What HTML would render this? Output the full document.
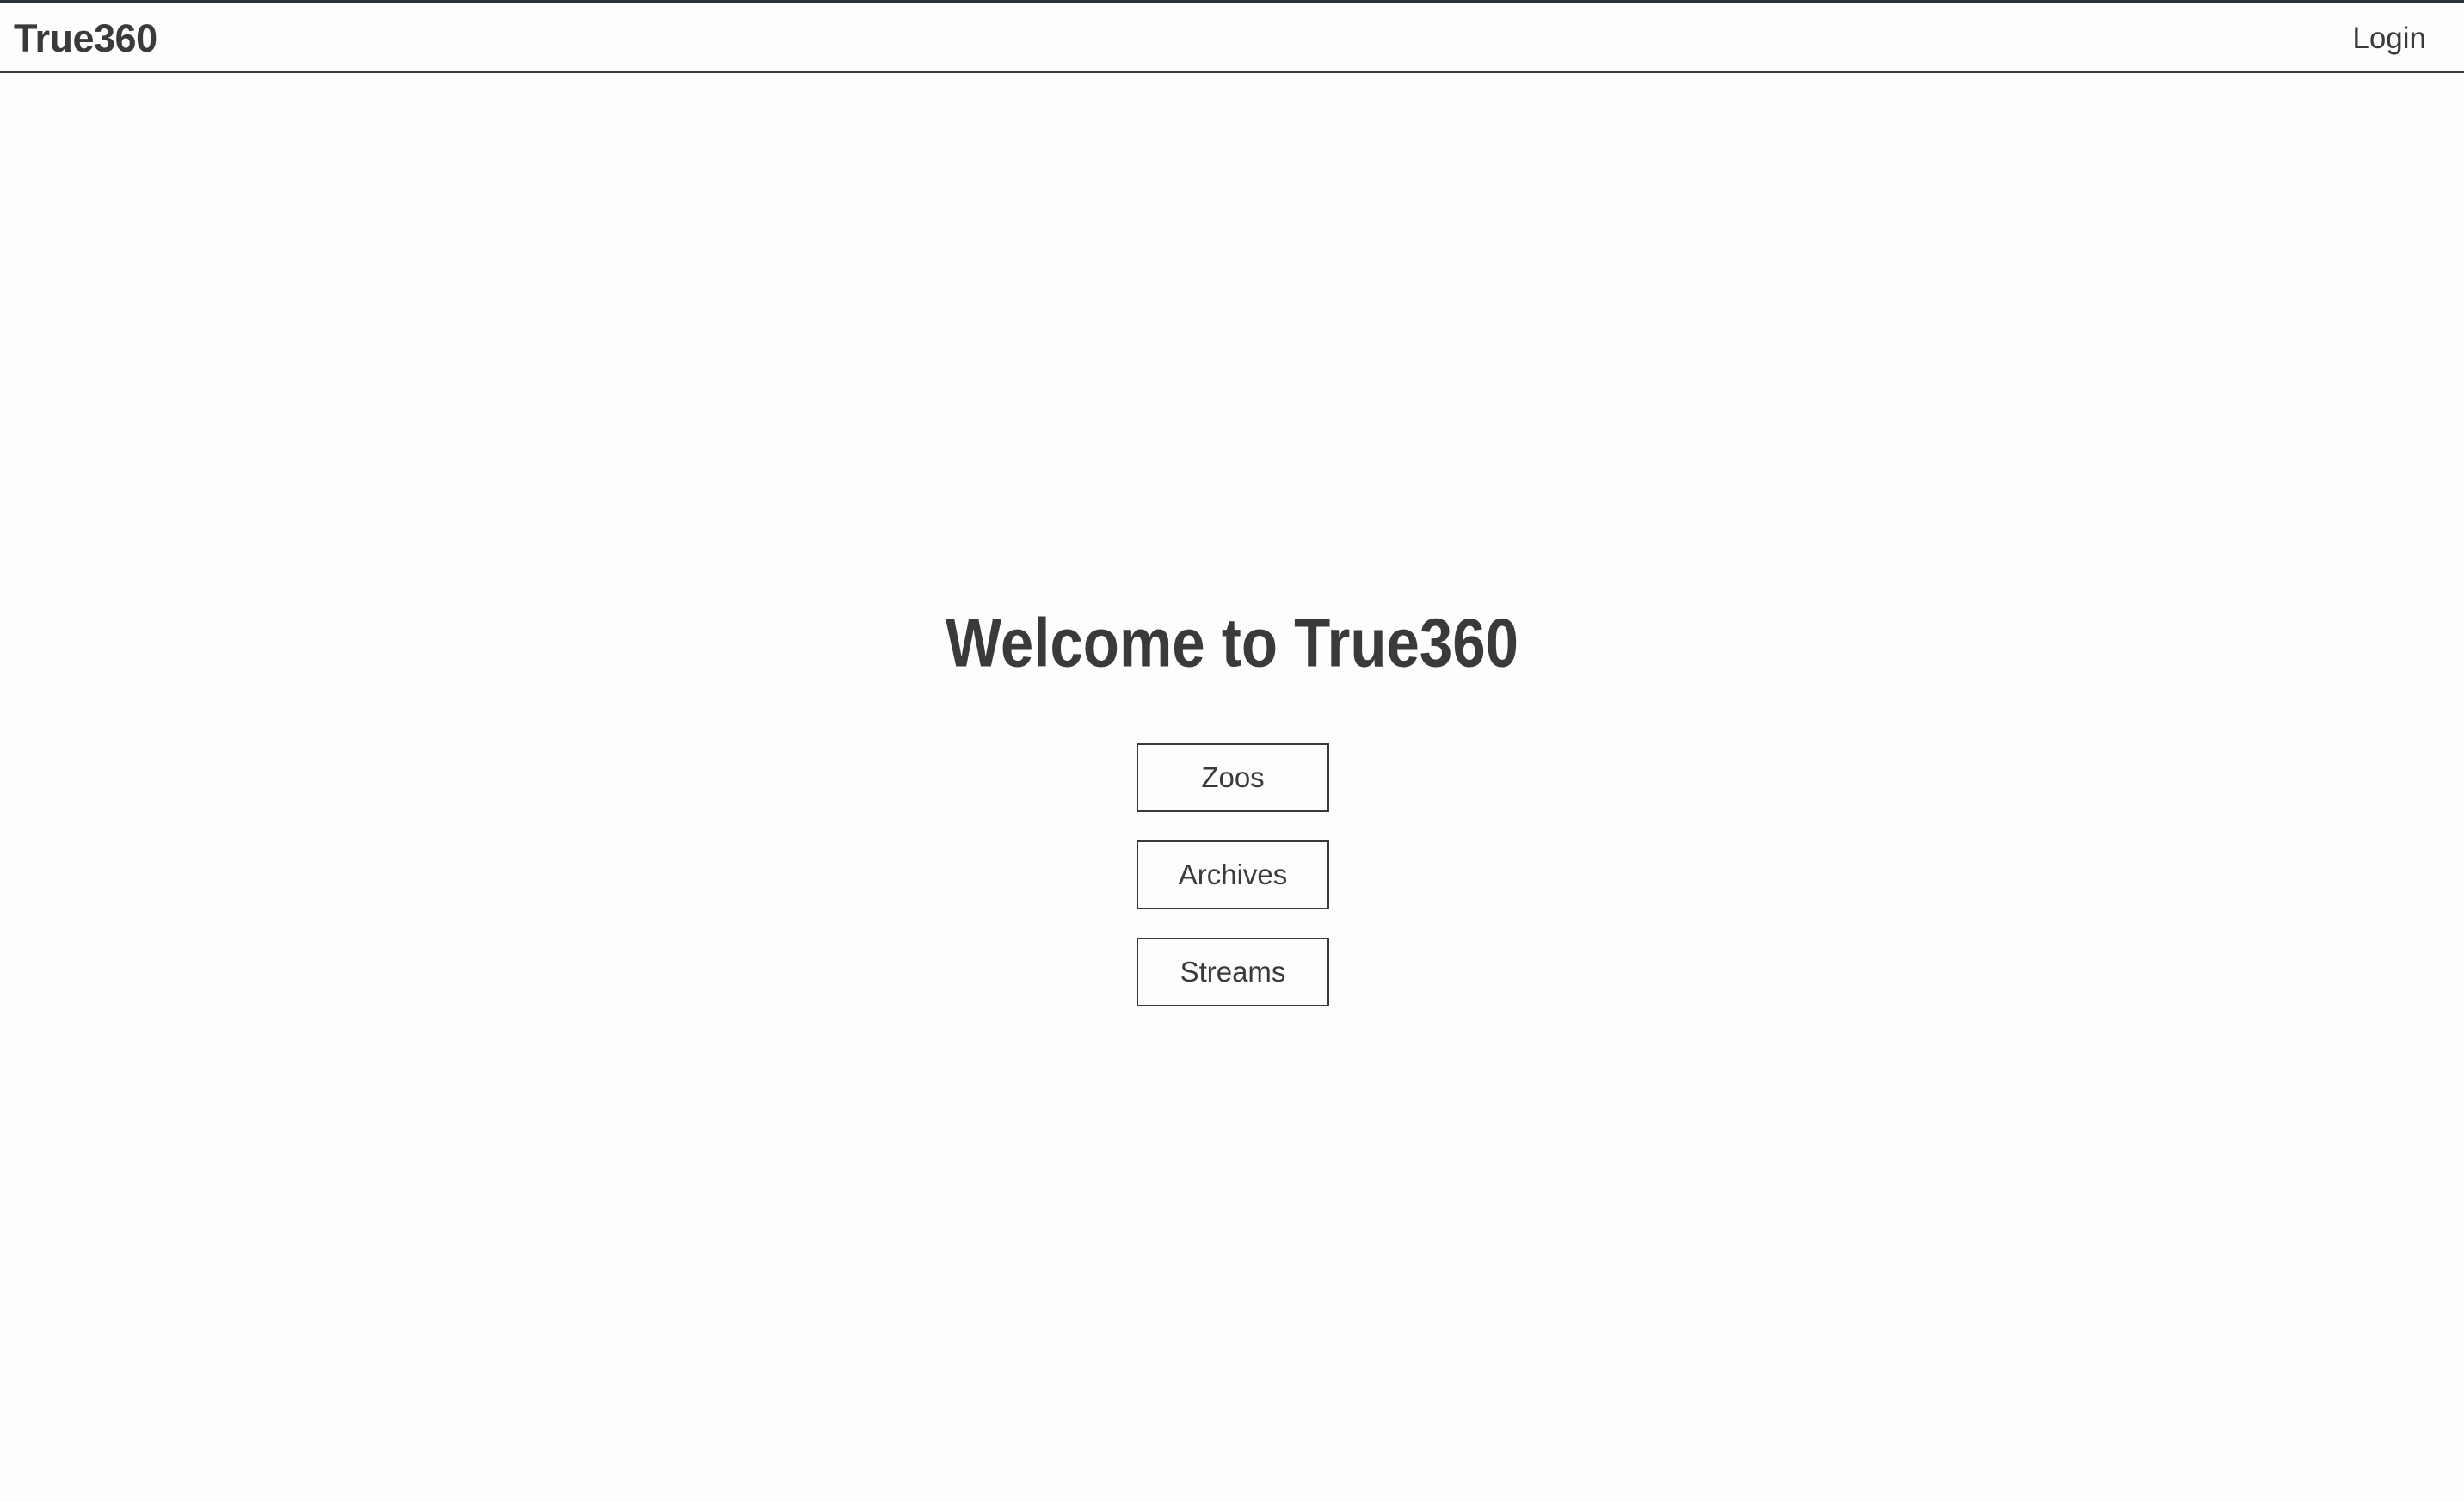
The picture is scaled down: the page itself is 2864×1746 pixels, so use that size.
<!DOCTYPE html>
<html><head><meta charset="utf-8"><style>
html,body{margin:0;padding:0;width:2864px;height:1746px;background:#fdfdfd;font-family:"Liberation Sans",sans-serif;color:#3a3a3a;overflow:hidden}
.top{position:absolute;left:0;top:0;width:2864px;height:3px;background:#2f3440}
.hdr{position:absolute;left:0;top:3px;width:2864px;height:79px;border-bottom:3px solid #3a3a3a}
.logo{position:absolute;left:16px;top:16px;font-size:45px;font-weight:bold;letter-spacing:-0.5px}
.login{position:absolute;right:44px;top:22px;font-size:35px}
h1{position:absolute;left:0;width:2864px;top:700px;margin:0;text-align:center;font-size:69px;font-weight:bold;line-height:96px;transform:scaleY(1.15)}
.btn{position:absolute;left:1321px;width:220px;height:76px;border:2px solid #3a3a3a;text-align:center;line-height:76px;font-size:33px}
</style></head><body>
<div class="top"></div>
<div class="hdr"><div class="logo">True360</div><div class="login">Login</div></div>
<h1>Welcome to True360</h1>
<div class="btn" style="top:864px">Zoos</div>
<div class="btn" style="top:977px">Archives</div>
<div class="btn" style="top:1090px">Streams</div>
</body></html>
